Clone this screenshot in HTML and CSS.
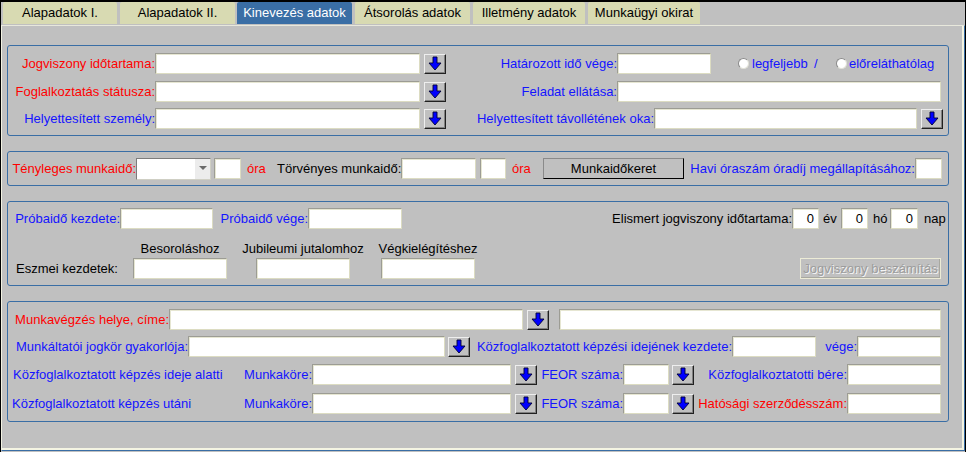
FILE: index.html
```html
<!DOCTYPE html>
<html lang="hu">
<head>
<meta charset="utf-8">
<title>Kinevezés adatok</title>
<link rel="stylesheet" href="styles.css">
</head>
<body>
<div class="window">
  <div class="tabs">
    <div class="tab t1">Alapadatok I.</div>
    <div class="tab t2">Alapadatok II.</div>
    <div class="tab t3 active">Kinevezés adatok</div>
    <div class="tab t4">Átsorolás adatok</div>
    <div class="tab t5">Illetmény adatok</div>
    <div class="tab t6">Munkaügyi okirat</div>
  </div>
  <div class="panel">
    <!-- group 1 -->
    <div class="group g1">
      <div class="row">
        <span class="lbl r red w147">Jogviszony időtartama:</span>
        <span class="inp w265"></span>
        <span class="arr ml4"><svg viewBox="0 0 20 18" width="20" height="18"><path d="M8 2H12V8H16L10 15L4 8H8Z"/></svg></span>
        <span class="lbl r blue w171">Határozott idő vége:</span>
        <span class="inp w94"></span>
        <span class="radio ml27"></span>
        <span class="lbl blue ml3 w62">legfeljebb</span>
        <span class="lbl blue w22">/</span>
        <span class="radio"></span>
        <span class="lbl blue ml2">előreláthatólag</span>
      </div>
      <div class="row mt7">
        <span class="lbl r red w147">Foglalkoztatás státusza:</span>
        <span class="inp w265"></span>
        <span class="arr ml4"><svg viewBox="0 0 20 18" width="20" height="18"><path d="M8 2H12V8H16L10 15L4 8H8Z"/></svg></span>
        <span class="lbl r blue w171">Feladat ellátása:</span>
        <span class="inp w324"></span>
      </div>
      <div class="row mt6">
        <span class="lbl r blue w147">Helyettesített személy:</span>
        <span class="inp w265"></span>
        <span class="arr ml4"><svg viewBox="0 0 20 18" width="20" height="18"><path d="M8 2H12V8H16L10 15L4 8H8Z"/></svg></span>
        <span class="lbl r blue w208">Helyettesített távollétének oka:</span>
        <span class="inp w263"></span>
        <span class="arr ml4"><svg viewBox="0 0 20 18" width="20" height="18"><path d="M8 2H12V8H16L10 15L4 8H8Z"/></svg></span>
      </div>
    </div>

    <!-- group 2 -->
    <div class="group g2">
      <div class="row">
        <span class="lbl r red w128">Tényleges munkaidő:</span>
        <span class="select w75"><span class="select-btn"></span></span>
        <span class="inp w27 ml3"></span>
        <span class="lbl red w36 pl6">óra</span>
        <span class="lbl r black w124">Törvényes munkaidő:</span>
        <span class="inp w75"></span>
        <span class="inp w26 ml4"></span>
        <span class="lbl red w37 pl6">óra</span>
        <span class="btn w141">Munkaidőkeret</span>
        <span class="lbl r blue w231">Havi óraszám óradíj megállapításához:</span>
        <span class="inp w27"></span>
      </div>
    </div>

    <!-- group 3 -->
    <div class="group g3">
      <div class="row">
        <span class="lbl r blue w112">Próbaidő kezdete:</span>
        <span class="inp w93"></span>
        <span class="lbl r blue w95">Próbaidő vége:</span>
        <span class="inp w94"></span>
        <span class="lbl black push">Elismert jogviszony időtartama:</span>
        <span class="inp num w27">0</span>
        <span class="lbl black w22 pl4">év</span>
        <span class="inp num w27">0</span>
        <span class="lbl black w22 pl5">hó</span>
        <span class="inp num w28">0</span>
        <span class="lbl black w30 pl6">nap</span>
      </div>
      <div class="row2">
        <span class="lbl black w125 pl8 eszmei">Eszmei kezdetek:</span>
        <div class="col">
          <span class="head">Besoroláshoz</span>
          <span class="inp w94"></span>
        </div>
        <div class="col ml29">
          <span class="head">Jubileumi jutalomhoz</span>
          <span class="inp w94"></span>
        </div>
        <div class="col ml31">
          <span class="head">Végkielégítéshez</span>
          <span class="inp w94"></span>
        </div>
        <span class="btn-dis w141">Jogviszony beszámítás</span>
      </div>
    </div>

    <!-- group 4 -->
    <div class="group g4">
      <div class="row">
        <span class="lbl r red w161">Munkavégzés helye, címe:</span>
        <span class="inp w354"></span>
        <span class="arr ml4"><svg viewBox="0 0 20 18" width="20" height="18"><path d="M8 2H12V8H16L10 15L4 8H8Z"/></svg></span>
        <span class="inp w382 ml10"></span>
      </div>
      <div class="row mt6">
        <span class="lbl r blue w180">Munkáltatói jogkör gyakorlója:</span>
        <span class="inp w257"></span>
        <span class="arr ml3"><svg viewBox="0 0 20 18" width="20" height="18"><path d="M8 2H12V8H16L10 15L4 8H8Z"/></svg></span>
        <span class="lbl r blue w262">Közfoglalkoztatott képzési idejének kezdete:</span>
        <span class="inp w84"></span>
        <span class="lbl r blue w41">vége:</span>
        <span class="inp w84"></span>
      </div>
      <div class="row mt7">
        <span class="lbl blue w235 pl5">Közfoglalkoztatott képzés ideje alatti</span>
        <span class="lbl r blue w69">Munkaköre:</span>
        <span class="inp w199"></span>
        <span class="arr ml4"><svg viewBox="0 0 20 18" width="20" height="18"><path d="M8 2H12V8H16L10 15L4 8H8Z"/></svg></span>
        <span class="lbl r blue w86">FEOR száma:</span>
        <span class="inp w46"></span>
        <span class="arr ml3"><svg viewBox="0 0 20 18" width="20" height="18"><path d="M8 2H12V8H16L10 15L4 8H8Z"/></svg></span>
        <span class="lbl r blue w153">Közfoglalkoztatotti bére:</span>
        <span class="inp w94"></span>
      </div>
      <div class="row mt8">
        <span class="lbl blue w235 pl4">Közfoglalkoztatott képzés utáni</span>
        <span class="lbl r blue w69">Munkaköre:</span>
        <span class="inp w199"></span>
        <span class="arr ml4"><svg viewBox="0 0 20 18" width="20" height="18"><path d="M8 2H12V8H16L10 15L4 8H8Z"/></svg></span>
        <span class="lbl r blue w86">FEOR száma:</span>
        <span class="inp w46"></span>
        <span class="arr ml3"><svg viewBox="0 0 20 18" width="20" height="18"><path d="M8 2H12V8H16L10 15L4 8H8Z"/></svg></span>
        <span class="lbl r red w153">Hatósági szerződésszám:</span>
        <span class="inp w94"></span>
      </div>
    </div>
  </div>
</div>
</body>
</html>
```

FILE: styles.css
```css
html, body {
  margin: 0;
  padding: 0;
  background: #000;
}
body {
  font-family: "Liberation Sans", Arial, sans-serif;
  font-size: 13px;
  color: #000;
}
.window {
  margin: 2px 1px 0 1px;
  height: 450px;
  background: #c0c0c0;
  overflow: hidden;
}

/* tabs */
.tabs {
  display: flex;
  height: 22px;
  padding-left: 2px;
}
.tab {
  flex: none;
  height: 22px;
  line-height: 22px;
  text-align: center;
  background: #d8dab2;
  color: #000;
  margin-right: 3px;
  border-radius: 2px 2px 0 0;
  white-space: nowrap;
}
.tab.active {
  background: #3a6ea5;
  color: #fff;
}
.t1 { width: 114px; }
.t2 { width: 115px; margin-right: 2px; }
.t3 { width: 115px; }
.t4 { width: 115px; }
.t5 { width: 112px; }
.t6 { width: 112px; }

/* main panel */
.panel {
  margin-top: 1px;
  height: 426px;
  box-sizing: border-box;
  border: 1px solid #3a6ea5;
  border-left-color: #f2f2e2;
  border-top-color: #e8e8dc;
  box-shadow: inset -2px -2px 0 #f4f4e2;
  overflow: hidden;
}
.group {
  width: 942px;
  box-sizing: border-box;
  margin-left: 5px;
  border: 1px solid #3a6ea5;
  border-radius: 3px;
}
.g1 { margin-top: 19px; padding: 7px 0 6px 0; }
.g2 { margin-top: 15px; padding: 6px 0 6px 0; }
.g3 { margin-top: 15px; padding: 6px 0 6px 0; }
.g4 { margin-top: 15px; padding: 7px 0 7px 0; }

.row {
  display: flex;
  align-items: center;
  height: 21px;
}
.row2 {
  display: flex;
  align-items: flex-end;
  margin-top: 12px;
}

/* labels */
.lbl {
  flex: none;
  white-space: nowrap;
  line-height: 15px;
  box-sizing: border-box;
}
.r { text-align: right; }
.red { color: #ff0000; }
.blue { color: #1414ff; }
.black { color: #000; }
.push { margin-left: auto; }
.eszmei { height: 21px; line-height: 21px; }

/* inputs */
.inp {
  flex: none;
  display: block;
  height: 21px;
  box-sizing: border-box;
  background: #fff;
  border: 1px solid;
  border-color: #9c9c94 #dcdcc2 #dcdcc2 #9c9c94;
  box-shadow: inset 1px 1px 0 #e6e6d2;
}
.num {
  text-align: right;
  padding-right: 4px;
  line-height: 19px;
  color: #000;
}

.select {
  flex: none;
  display: flex;
  justify-content: flex-end;
  height: 22px;
  box-sizing: border-box;
  background: #fff;
  border: 1px solid;
  border-color: #7c7c7c #cfcfc4 #cfcfc4 #7c7c7c;
}
.select-btn {
  width: 15px;
  height: 100%;
  background: #ececec;
  position: relative;
}
.select-btn::after {
  content: "";
  position: absolute;
  left: 4px;
  top: 7px;
  border-left: 4px solid transparent;
  border-right: 4px solid transparent;
  border-top: 4px solid #6a6a6a;
}

/* arrow button */
.arr {
  flex: none;
  display: block;
  width: 22px;
  height: 20px;
  box-sizing: border-box;
  background: #c0c0c0;
  border: 1px solid;
  border-color: #eeeeee #202020 #202020 #eeeeee;
  box-shadow: inset -1px -1px 0 #808080;
}
.arr svg {
  display: block;
}
.arr path {
  fill: #0000ff;
  stroke: #000033;
  stroke-width: 0.9;
  stroke-linejoin: miter;
}

/* radio */
.radio {
  flex: none;
  display: block;
  width: 11px;
  height: 11px;
  box-sizing: border-box;
  border-radius: 50%;
  background: #fff;
  border: 1px solid;
  border-color: #8a8a8a #e2e2d8 #e2e2d8 #8a8a8a;
}

/* buttons */
.btn {
  flex: none;
  display: block;
  height: 21px;
  line-height: 19px;
  box-sizing: border-box;
  text-align: center;
  background: #c0c0c0;
  border: 1px solid;
  border-color: #8a8a8a #000 #000 #8a8a8a;
  color: #000;
}
.btn-dis {
  flex: none;
  display: block;
  height: 21px;
  line-height: 19px;
  box-sizing: border-box;
  text-align: center;
  background: #c0c0c0;
  border: 1px solid #ecebd6;
  box-shadow: inset -1px -1px 0 #a8a8a0;
  color: #9c9c9c;
  text-shadow: 1px 1px 0 #f4f4f4;
  margin-left: auto;
  margin-right: 7px;
  white-space: nowrap;
}

/* columns */
.col {
  flex: none;
  display: flex;
  flex-direction: column;
  align-items: center;
  width: 94px;
}
.head {
  white-space: nowrap;
  line-height: 15px;
  margin-bottom: 2px;
  color: #000;
}

/* widths */
.w22 { width: 22px; }
.w26 { width: 26px; }
.w27 { width: 27px; }
.w28 { width: 28px; }
.w30 { width: 30px; }
.w36 { width: 36px; }
.w37 { width: 37px; }
.w41 { width: 41px; }
.w46 { width: 46px; }
.w62 { width: 62px; }
.w69 { width: 69px; }
.w75 { width: 75px; }
.w84 { width: 84px; }
.w86 { width: 86px; }
.w93 { width: 93px; }
.w94 { width: 94px; }
.w95 { width: 95px; }
.w112 { width: 112px; }
.w124 { width: 124px; }
.w125 { width: 125px; }
.w128 { width: 128px; }
.w141 { width: 141px; }
.w147 { width: 147px; }
.w153 { width: 153px; }
.w161 { width: 161px; }
.w171 { width: 171px; }
.w180 { width: 180px; }
.w199 { width: 199px; }
.w208 { width: 208px; }
.w231 { width: 231px; }
.w235 { width: 235px; }
.w257 { width: 257px; }
.w262 { width: 262px; }
.w263 { width: 263px; }
.w265 { width: 265px; }
.w324 { width: 324px; }
.w354 { width: 354px; }
.w382 { width: 382px; }

/* spacing */
.ml2 { margin-left: 2px; }
.ml3 { margin-left: 3px; }
.ml4 { margin-left: 4px; }
.ml10 { margin-left: 10px; }
.ml27 { margin-left: 27px; }
.ml29 { margin-left: 29px; }
.ml31 { margin-left: 31px; }
.pl4 { padding-left: 4px; }
.pl5 { padding-left: 5px; }
.pl6 { padding-left: 6px; }
.pl8 { padding-left: 8px; }
.mt6 { margin-top: 6px; }
.mt7 { margin-top: 7px; }
.mt8 { margin-top: 8px; }
```
